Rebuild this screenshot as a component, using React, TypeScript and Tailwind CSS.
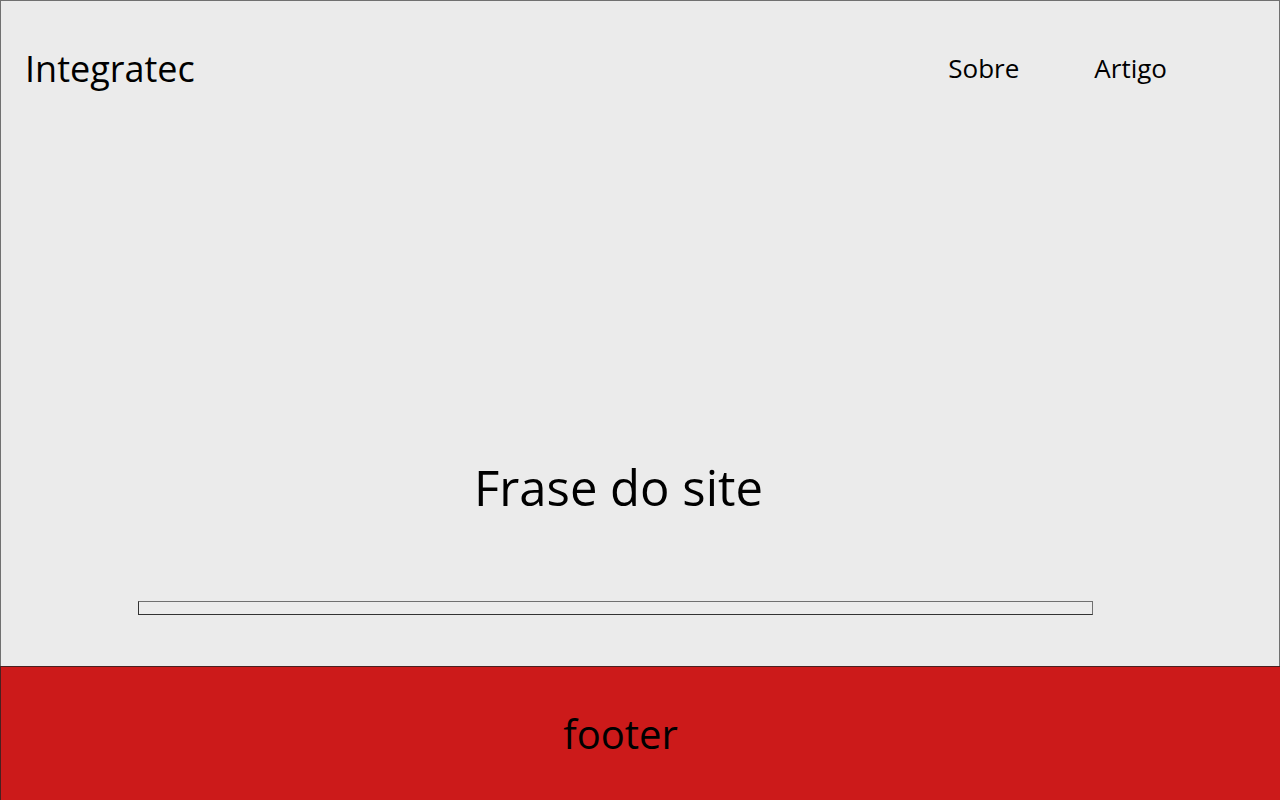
export default function App() {
  return (
    <div className="w-[1280px] h-[800px] flex flex-col bg-[#ebebeb] text-black font-['Open_Sans',sans-serif]">
      <main className="h-[666px] flex flex-col border border-b-0 border-[#707070] bg-[#ebebeb]">
        <header className="h-[134px] flex items-center justify-between pl-[24px] pr-[112px]">
          <h1 className="text-[36px] leading-[49px]">Integratec</h1>
          <nav className="flex items-center gap-[75px] text-[26px]">
            <a href="#">Sobre</a>
            <a href="#">Artigo</a>
          </nav>
        </header>

        <div className="flex-1" />

        <p className="text-[49px] leading-[72px] text-center pr-[43px]">Frase do site</p>

        <div className="mt-[78px] mb-[51px] ml-[137px] w-[955px] h-[14px] border border-[#333] border-t-[#707070] border-r-[#707070] bg-[#ececec]" />
      </main>

      <footer className="flex-1 flex items-center justify-center pr-[40px] bg-[#cc1a1a] border-t border-l border-[#4a2020]">
        <span className="text-[40px] leading-[60px]">footer</span>
      </footer>
    </div>
  );
}
